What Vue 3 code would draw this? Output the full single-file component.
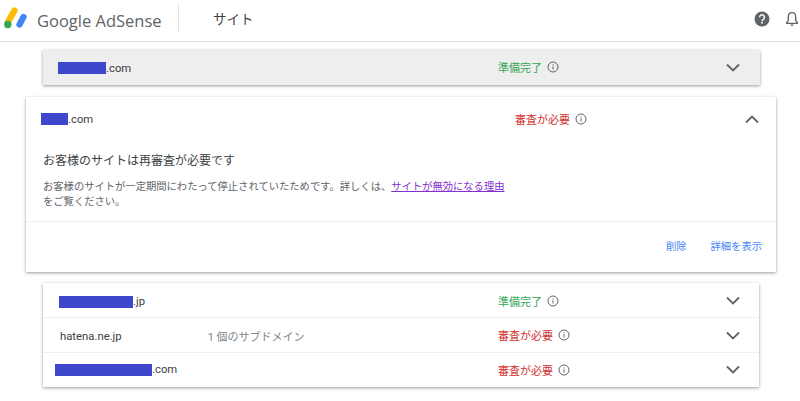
<script setup>
const listRows = [
  { id: 1, block: 74, lead: 16, name: '.jp', status: 'ok' },
  { id: 2, block: 0, lead: 17, name: 'hatena.ne.jp', sub: '1 個のサブドメイン', status: 'bad' },
  { id: 3, block: 97, lead: 12, name: '.com', status: 'bad' },
]
const labels = { ok: '準備完了', bad: '審査が必要' }
</script>

<template>
  <div class="page">
    <header class="bar">
      <svg class="logo" width="24" height="24" viewBox="0 0 24 24">
        <line x1="10.500" y1="3.500" x2="4" y2="15" stroke="#fbbc04" stroke-width="6.400" stroke-linecap="round" />
        <line x1="19.500" y1="10" x2="15.500" y2="17.500" stroke="#4285f4" stroke-width="6.200" stroke-linecap="round" />
        <circle cx="3.800" cy="17.500" r="3.700" fill="#34a853" />
      </svg>
      <span class="brand">Google AdSense</span>
      <span class="divider"></span>
      <span class="title">サイト</span>
      <span class="spacer"></span>
      <svg class="help" width="16" height="16" viewBox="0 0 16 16">
        <circle cx="8" cy="8" r="7.500" fill="#5f6368" />
        <path d="M5.600 6.300a2.400 2.400 0 1 1 3.700 2c-.8.500-1.300.9-1.300 1.900" fill="none" stroke="#fff" stroke-width="1.500" />
        <rect x="7.200" y="11" width="1.600" height="1.600" fill="#fff" />
      </svg>
      <svg class="bell" width="14" height="16" viewBox="0 0 14 16">
        <path d="M7 1.600c-2.400 0-3.700 1.800-3.700 4v4.200L1.600 11.600v.8h10.800v-.8l-1.700-1.800V5.600c0-2.200-1.300-4-3.700-4z" fill="none" stroke="#5f6368" stroke-width="1.300" />
        <path d="M5.500 13.600h3a1.500 1.500 0 0 1-3 0z" fill="#5f6368" />
      </svg>
    </header>

    <section class="card grey">
      <div class="row">
        <div class="name" style="padding-left: 15px"><i class="mask" style="width: 48px"></i>.com</div>
        <div class="status ok">準備完了<svg class="info" width="12" height="12" viewBox="0 0 12 12"><circle cx="6" cy="6" r="5" fill="none" stroke="#5f6368" stroke-width="1" /><path d="M6 5.300v3.200M6 3.300v1.100" stroke="#5f6368" stroke-width="1" /></svg></div>
        <svg class="chev" width="14" height="9" viewBox="0 0 14 9"><path d="M1 1.500l6 6 6-6" fill="none" stroke="#5f6368" stroke-width="1.800" /></svg>
      </div>
    </section>

    <section class="card open">
      <div class="row">
        <div class="name" style="padding-left: 15px"><i class="mask" style="width: 27px"></i>.com</div>
        <div class="status bad">審査が必要<svg class="info" width="12" height="12" viewBox="0 0 12 12"><circle cx="6" cy="6" r="5" fill="none" stroke="#5f6368" stroke-width="1" /><path d="M6 5.300v3.200M6 3.300v1.100" stroke="#5f6368" stroke-width="1" /></svg></div>
        <svg class="chev" width="14" height="9" viewBox="0 0 14 9"><path d="M1 7.500l6-6 6 6" fill="none" stroke="#5f6368" stroke-width="1.800" /></svg>
      </div>
      <div class="detail">
        <h2>お客様のサイトは再審査が必要です</h2>
        <p>お客様のサイトが一定期間にわたって停止されていたためです。詳しくは、<a href="#">サイトが無効になる理由</a><br />をご覧ください。</p>
      </div>
      <div class="actions">
        <a href="#">削除</a>
        <a href="#">詳細を表示</a>
      </div>
    </section>

    <section class="card list">
      <div v-for="r in listRows" :key="r.id" class="row">
        <div class="name" :style="{ paddingLeft: r.lead + 'px' }">
          <i v-if="r.block" class="mask" :style="{ width: r.block + 'px' }"></i><span>{{ r.name }}</span>
          <span v-if="r.sub" class="sub">{{ r.sub }}</span>
        </div>
        <div class="status" :class="r.status">{{ labels[r.status] }}<svg class="info" width="12" height="12" viewBox="0 0 12 12"><circle cx="6" cy="6" r="5" fill="none" stroke="#5f6368" stroke-width="1" /><path d="M6 5.300v3.200M6 3.300v1.100" stroke="#5f6368" stroke-width="1" /></svg></div>
        <svg class="chev" width="14" height="9" viewBox="0 0 14 9"><path d="M1 1.500l6 6 6-6" fill="none" stroke="#5f6368" stroke-width="1.800" /></svg>
      </div>
    </section>
  </div>
</template>

<style scoped>
* { box-sizing: border-box; }
.page {
  width: 800px;
  height: 401px;
  overflow: hidden;
  background: #fff;
  font-family: Roboto, "Noto Sans CJK JP", sans-serif;
  color: #3c4043;
}
.bar {
  height: 42px;
  border-bottom: 1px solid #e0e0e0;
  display: flex;
  align-items: center;
  padding-left: 4px;
}
.logo { flex: none; margin-top: -4px; }
.brand {
  margin-left: 9px;
  font-family: "Open Sans", sans-serif;
  font-size: 16.500px;
  color: #5f6368;
  width: 141px;
  white-space: nowrap;
}
.divider { width: 1px; height: 29px; background: #e4e4e4; margin-top: -4px; }
.title { margin-left: 34px; font-size: 13.500px; color: #3c4043; margin-top: -5px; }
.spacer { flex: 1; }
.help { margin-top: -4px; }
.bell { margin: -4px 1px 0 15px; }
.card { background: #fff; box-shadow: 0 1px 3px rgba(0,0,0,.4); }
.grey { background: #eee; margin: 8px 40px 0 43px; height: 35px; }
.open { margin: 12px 24px 0 26px; height: 175px; display: flex; flex-direction: column; }
.list { margin: 11px 41px 0 43px; }
.row {
  height: 34px;
  display: flex;
  align-items: center;
  font-size: 11.300px;
}
.list .row:first-child { padding-top: 1px; }
.list .row + .row { border-top: 1px solid #eee; height: 35px; }
.list .row:last-child { padding-bottom: 1px; }
.grey .row { height: 35px; padding-bottom: 1px; }
.open .row { height: 44px; }
.name { width: 455px; flex: none; display: flex; align-items: center; white-space: pre; }
.open .name { width: 489px; }
.grey .name { padding-top: 2px; }
.list .row:first-child .name, .list .row:nth-child(2) .name { padding-top: 2px; }
.mask { display: inline-block; height: 12px; background: #3f48cc; }
.sub { margin-left: 86px; color: #80868b; font-size: 11px; }
.status { width: 228px; flex: none; display: flex; align-items: center; font-size: 11px; }
.open .status { width: 230px; }
.ok { color: #34a853; }
.bad { color: #d0302f; }
.info { margin-left: 5px; }
.detail { padding: 11px 17px 0; flex: 1; }
h2 { margin: 0; font-size: 12px; font-weight: 400; line-height: 18px; color: #3c4043; }
p { margin: 9px 0 0; font-size: 10.300px; line-height: 15px; color: #5f6368; }
p a { color: #8430ce; }
.actions {
  height: 51px;
  border-top: 1px solid #eee;
  display: flex;
  justify-content: flex-end;
  align-items: center;
  gap: 24px;
  padding: 0 14px 3px 0;
}
.actions a { color: #4285f4; font-size: 10.300px; text-decoration: none; }
</style>
